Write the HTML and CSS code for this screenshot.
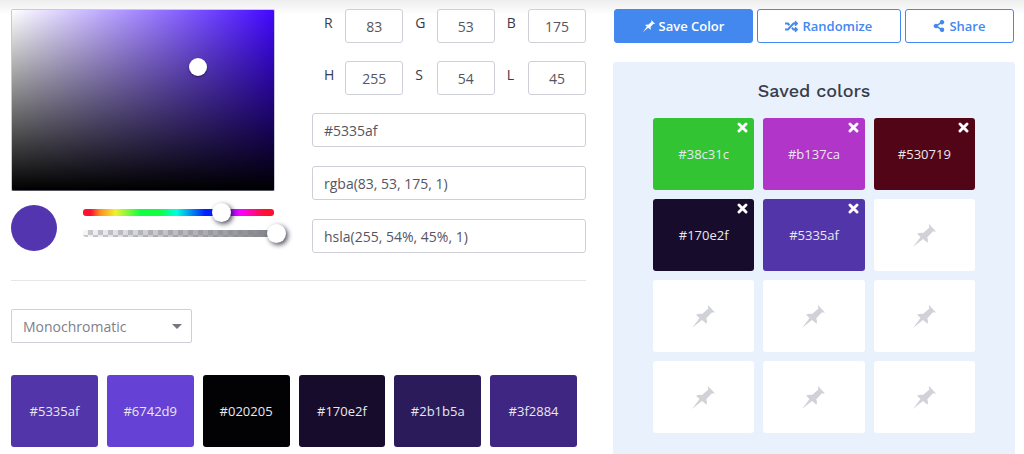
FILE: index.html
```html
<!DOCTYPE html>
<html lang="en">
<head>
<meta charset="utf-8">
<meta name="viewport" content="width=device-width, initial-scale=1">
<title>Color picker</title>
<link rel="stylesheet" href="styles.css">
</head>
<body>
<svg class="symbols" aria-hidden="true">
  <symbol id="pin" viewBox="0 0 23 23"><path d="M16 0 23 7.400Q21.500 7.800 20 7.300L14.300 13.200Q15.500 16 14.600 18.800L10 15 0 23 7.500 13 4 9.800Q7 8.500 10 9L16.400 3.400Q15.500 1.500 16 0Z"/></symbol>
  <symbol id="cross" viewBox="0 0 10 10"><path d="M1.800 1.800 8.200 8.200M8.200 1.800 1.800 8.200" stroke="currentColor" stroke-width="2.600" stroke-linecap="round"/></symbol>
</svg>
<main class="page">
  <section class="editor">
    <div class="mixer">
      <div class="picker">
        <div class="shade"><span class="shade-handle"></span></div>
        <div class="controls">
          <span class="preview"></span>
          <div class="sliders">
            <div class="bar hue"><input type="range" min="0" max="360" value="259" aria-label="Hue"></div>
            <div class="bar alpha"><input type="range" min="0" max="100" value="100" aria-label="Alpha"></div>
          </div>
        </div>
      </div>
      <div class="fields">
        <div class="channels">
          <label class="channel"><span class="letter">R</span><input class="field number" value="83"></label>
          <label class="channel"><span class="letter">G</span><input class="field number" value="53"></label>
          <label class="channel"><span class="letter">B</span><input class="field number" value="175"></label>
          <label class="channel"><span class="letter">H</span><input class="field number" value="255"></label>
          <label class="channel"><span class="letter">S</span><input class="field number" value="54"></label>
          <label class="channel"><span class="letter">L</span><input class="field number" value="45"></label>
        </div>
        <div class="codes">
          <input class="field" value="#5335af" aria-label="Hex">
          <input class="field" value="rgba(83, 53, 175, 1)" aria-label="RGBA">
          <input class="field" value="hsla(255, 54%, 45%, 1)" aria-label="HSLA">
        </div>
      </div>
    </div>
    <div class="schemes">
      <div class="select-wrap">
        <select class="scheme" aria-label="Color scheme"><option>Monochromatic</option></select>
      </div>
      <div class="palette">
        <button class="swatch c-5335af">#5335af</button>
        <button class="swatch c-6742d9">#6742d9</button>
        <button class="swatch c-020205">#020205</button>
        <button class="swatch c-170e2f">#170e2f</button>
        <button class="swatch c-2b1b5a">#2b1b5a</button>
        <button class="swatch c-3f2884">#3f2884</button>
      </div>
    </div>
  </section>
  <aside class="library">
    <div class="actions">
      <button class="action primary"><svg class="icon"><use href="#pin"/></svg>Save Color</button>
      <button class="action"><svg class="icon shuffle" viewBox="0 0 512 512"><path d="M505 359c9 9 9 25 0 34l-80 80c-15 15-41 4-41-17v-40h-58c-4 0-7-1-9-4l-70-75 53-57 53 56h31v-40c0-21 26-32 41-17zM12 176h84l53 56 53-57-70-75c-2-3-5-4-9-4H12c-7 0-12 5-12 12v56c0 7 5 12 12 12zm372 0v40c0 21 26 32 41 17l80-80c9-9 9-25 0-34l-80-80c-15-15-41-4-41 17v40h-58c-4 0-7 1-9 4L96 336H12c-7 0-12 5-12 12v56c0 7 5 12 12 12h111c3 0 6-1 8-4l221-236z"/></svg>Randomize</button>
      <button class="action"><svg class="icon" viewBox="0 0 448 512"><path d="M352 320c-23 0-43 8-60 21l-103-64a96 96 0 0 0 0-42l103-64a96 96 0 1 0-34-54l-103 64a96 96 0 1 0 0 150l103 64a96 96 0 1 0 94-75z"/></svg>Share</button>
    </div>
    <div class="panel">
      <h2 class="title">Saved colors</h2>
      <div class="saved">
        <div class="slot c-38c31c">#38c31c<button class="remove" aria-label="Remove #38c31c"><svg><use href="#cross"/></svg></button></div>
        <div class="slot c-b137ca">#b137ca<button class="remove" aria-label="Remove #b137ca"><svg><use href="#cross"/></svg></button></div>
        <div class="slot c-530719">#530719<button class="remove" aria-label="Remove #530719"><svg><use href="#cross"/></svg></button></div>
        <div class="slot c-170e2f">#170e2f<button class="remove" aria-label="Remove #170e2f"><svg><use href="#cross"/></svg></button></div>
        <div class="slot c-5335af">#5335af<button class="remove" aria-label="Remove #5335af"><svg><use href="#cross"/></svg></button></div>
        <div class="slot"><svg class="pin"><use href="#pin"/></svg></div>
        <div class="slot"><svg class="pin"><use href="#pin"/></svg></div>
        <div class="slot"><svg class="pin"><use href="#pin"/></svg></div>
        <div class="slot"><svg class="pin"><use href="#pin"/></svg></div>
        <div class="slot"><svg class="pin"><use href="#pin"/></svg></div>
        <div class="slot"><svg class="pin"><use href="#pin"/></svg></div>
        <div class="slot"><svg class="pin"><use href="#pin"/></svg></div>
      </div>
    </div>
  </aside>
</main>
</body>
</html>
```
FILE: styles.css
```css
* { box-sizing: border-box; }

body {
  margin: 0;
  background: linear-gradient(#eeeeee, #ffffff 15px) no-repeat #ffffff;
  color: #3a3a48;
  font-family: "Open Sans", sans-serif;
  font-size: 14px;
}

button, input, select { font: inherit; margin: 0; }
button { cursor: pointer; }
.symbols { position: absolute; width: 0; height: 0; }

.page {
  display: grid;
  grid-template-columns: 575fr 402fr;
  gap: 27px;
  min-height: 100vh;
  padding: 9px 9px 0 11px;
}

/* Mixer */
.mixer {
  display: grid;
  grid-template-columns: 264fr 274fr;
  gap: 37px;
  padding-bottom: 27px;
  border-bottom: 1px solid #e6e6e9;
}

.shade {
  position: relative;
  height: 182px;
  border: 1px solid #c9c9d2;
  border-bottom-color: #55555e;
  border-radius: 2px;
  background: linear-gradient(to top, #000000, transparent), linear-gradient(to right, #ffffff, #4208ff);
}

.shade-handle {
  position: absolute;
  left: 71%;
  top: 32%;
  width: 18px;
  height: 18px;
  margin: -10px -9px;
  border-radius: 50%;
  background: #ffffff;
  box-shadow: 0 1px 2px rgba(0, 0, 0, 0.5);
}

.controls {
  display: flex;
  gap: 26px;
  padding-top: 14px;
}

.preview {
  flex: none;
  width: 46px;
  height: 46px;
  border-radius: 50%;
  background: #5335af;
}

.sliders {
  display: flex;
  flex: 1;
  flex-direction: column;
  gap: 14px;
  padding: 4px 1px 0 0;
}

.bar {
  display: flex;
  align-items: center;
  height: 7px;
  border-radius: 3px;
}

.hue { background: linear-gradient(to right, #ff1030 4%, #ff9020 9%, #f0f030 17%, #10ff40 30%, #10ff40 40%, #00ffe0 49%, #0020ff 64%, #0020ff 68%, #ff00ff 83%, #ff1030 95%); }

.alpha {
  background:
    linear-gradient(to right, rgba(130, 130, 138, 0), #82828a),
    repeating-conic-gradient(#c8c8cf 0 25%, #f6f6f8 0 50%) 0 0 / 10px 10px;
}

.bar input {
  -webkit-appearance: none;
  appearance: none;
  flex: 1;
  min-width: 0;
  height: 19px;
  margin: 0 -12px;
  background: transparent;
}

.bar input::-webkit-slider-thumb {
  -webkit-appearance: none;
  width: 19px;
  height: 19px;
  border-radius: 50%;
  background: #ffffff;
  box-shadow: 2px 2px 5px rgba(20, 20, 45, 0.75);
}

/* Value fields */
.fields {
  display: flex;
  flex-direction: column;
  gap: 18px;
}

.channels {
  display: grid;
  grid-template-columns: repeat(3, 1fr);
  gap: 18px 12px;
  padding-left: 12px;
}

.channel { display: flex; }

.letter {
  flex: 1;
  line-height: 28px;
}

.field {
  display: block;
  width: 100%;
  height: 34px;
  padding: 0 11px;
  border: 1px solid #cfcfd8;
  border-radius: 3px;
  background: #ffffff;
  color: #555562;
}

.number {
  width: 58px;
  padding: 0;
  text-align: center;
}

.codes { display: grid; gap: 19px; }

/* Palette */
.schemes { padding: 28px 9px 0 0; }

.select-wrap {
  position: relative;
  width: 181px;
}

.select-wrap::after {
  content: "";
  position: absolute;
  right: 10px;
  top: 15px;
  border: 5px solid transparent;
  border-top-color: #777782;
  border-bottom: 0;
  pointer-events: none;
}

.scheme {
  -webkit-appearance: none;
  appearance: none;
  display: block;
  width: 100%;
  height: 34px;
  padding: 0 11px;
  border: 1px solid #cfcfd8;
  border-radius: 2px;
  background: #ffffff;
  color: #80808a;
}

.palette {
  display: grid;
  grid-template-columns: repeat(6, 1fr);
  gap: 9px;
  padding: 32px 0 7px;
}

.swatch, .slot {
  height: 72px;
  padding: 0;
  border: 0;
  border-radius: 3px;
  color: #e8e8ee;
  font-size: 13px;
}

.c-5335af { background: #5335aa; }
.c-6742d9 { background: #6641d5; }
.c-020205 { background: #020205; }
.c-170e2f { background: #170c2c; }
.c-2b1b5a { background: #2b1b5a; }
.c-3f2884 { background: #3f2682; }
.c-38c31c { background: #32c433; }
.c-b137ca { background: #b135c8; }
.c-530719 { background: #530518; }

/* Saved colors */
.library {
  display: flex;
  flex-direction: column;
  gap: 19px;
}

.actions {
  display: flex;
  gap: 4px;
  padding: 0 1px;
}

.action {
  display: flex;
  flex: 1 0 auto;
  align-items: center;
  justify-content: center;
  gap: 4px;
  height: 34px;
  padding: 0 24px;
  border: 1px solid #4388ee;
  border-radius: 3px;
  background: #ffffff;
  color: #4388ee;
  font-size: 13px;
  font-weight: 600;
}

.primary {
  background: #4388ee;
  color: #ffffff;
}

.icon {
  width: 12px;
  height: 12px;
  fill: currentColor;
}

.shuffle {
  width: 13px;
  height: 13px;
}

.panel {
  flex: 1;
  padding: 16px 40px 20px;
  border-radius: 3px 3px 0 0;
  background: #e9f1fd;
}

.title {
  margin: 0 0 14px;
  color: #3c3c48;
  font-family: "Work Sans", Inter, sans-serif;
  font-size: 18px;
  font-weight: 500;
  line-height: 26px;
  text-align: center;
}

.saved {
  display: grid;
  grid-template-columns: repeat(3, 1fr);
  gap: 9px;
}

.slot {
  position: relative;
  display: flex;
  align-items: center;
  justify-content: center;
}

.slot:not([class*="c-"]) { background: #ffffff; }

.remove {
  position: absolute;
  top: 4px;
  right: 6px;
  display: flex;
  padding: 0;
  border: 0;
  background: none;
  color: #ffffff;
}

.remove svg {
  width: 11px;
  height: 11px;
}

.pin {
  width: 23px;
  height: 23px;
  fill: #d0d2d8;
}
```
